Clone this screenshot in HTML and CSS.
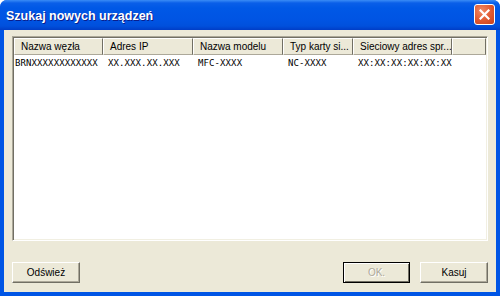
FILE: index.html
```html
<!DOCTYPE html>
<html lang="pl">
<head>
    <meta charset="UTF-8">
    <title>Szukaj nowych urządzeń</title>
    <link rel="stylesheet" href="styles.css">
</head>
<body>
    <div class="okno">
        <div class="pasek">
            <span class="tytul">Szukaj nowych urządzeń</span>
            <button class="zamknij" aria-label="Zamknij">
                <svg width="11" height="11" viewBox="0 0 11 11">
                    <path d="M1.5 1.5 L9.5 9.5 M9.5 1.5 L1.5 9.5" stroke="#fff" stroke-width="2.2" stroke-linecap="square"/>
                </svg>
            </button>
        </div>
        <div class="tresc">
            <div class="lista">
                <div class="wiersz naglowek">
                    <div class="kol">Nazwa węzła</div>
                    <div class="kol">Adres IP</div>
                    <div class="kol">Nazwa modelu</div>
                    <div class="kol">Typ karty si...</div>
                    <div class="kol">Sieciowy adres spr...</div>
                    <div class="kol"></div>
                </div>
                <div class="wiersz dane">
                    <div class="kom pierwsza">BRNXXXXXXXXXXXX</div>
                    <div class="kom">XX.XXX.XX.XXX</div>
                    <div class="kom">MFC-XXXX</div>
                    <div class="kom">NC-XXXX</div>
                    <div class="kom">XX:XX:XX:XX:XX:XX</div>
                    <div class="kom"></div>
                </div>
            </div>
            <div class="przyciski">
                <button class="przycisk">Odśwież</button>
                <div class="prawe">
                    <button class="przycisk domyslny" disabled>OK.</button>
                    <button class="przycisk">Kasuj</button>
                </div>
            </div>
        </div>
    </div>
</body>
</html>
```

FILE: styles.css
```css
body{
    margin: 0;
    font: 10px "Liberation Sans", sans-serif;
}
.okno{
    width: 500px;
    height: 296px;
    box-sizing: border-box;
    display: flex;
    flex-direction: column;
    background-color: #0055e5;
    border-radius: 7px 7px 0 0;
    overflow: hidden;
}
.pasek{
    height: 30px;
    flex-shrink: 0;
    display: flex;
    align-items: center;
    justify-content: space-between;
    padding: 0 5px 0 6px;
    background: linear-gradient(#3a8cf6 0, #0a5fe8 3px, #0058e6 8px, #0054e3 20px, #0050dc 26px, #003dc6 30px);
}
.tytul{
    color: white;
    font: bold 12.5px "Liberation Sans", sans-serif;
    text-shadow: 1px 1px 0 #0a1e8c;
    margin-top: 1px;
}
.zamknij{
    width: 21px;
    height: 21px;
    padding: 0;
    display: flex;
    align-items: center;
    justify-content: center;
    border: 1px solid white;
    border-radius: 3px;
    background: radial-gradient(circle at 35% 30%, #f08a66 0, #e0582f 55%, #c6411c 100%);
    margin-top: -2px;
}
.tresc{
    flex: 1;
    display: flex;
    flex-direction: column;
    justify-content: space-between;
    background-color: #ece9d8;
    margin: 0 4px 4px 4px;
    padding: 6px 8px 9px 8px;
}
.lista{
    height: 205px;
    box-sizing: border-box;
    background-color: white;
    border: 1px solid;
    border-color: #aca899 #fff #fff #aca899;
    box-shadow: inset 1px 1px 0 #716f64, inset -1px -1px 0 #f1efe2;
    padding: 1px;
}
.wiersz{
    display: grid;
    grid-template-columns: 89px 90px 90px 70px 99px 1fr;
}
.naglowek .kol{
    height: 15px;
    line-height: 15px;
    padding-left: 6px;
    background-color: #ece9d8;
    border-top: 1px solid white;
    border-left: 1px solid white;
    border-bottom: 1px solid #aca899;
    border-right: 1px solid #716f64;
    color: black;
    white-space: nowrap;
    overflow: hidden;
}
.dane .kom{
    height: 16px;
    line-height: 16px;
    padding-top: 3px;
    padding-left: 5px;
    white-space: nowrap;
    overflow: hidden;
    font: 9px "DejaVu Sans Mono", monospace;
    letter-spacing: 0.1px;
}
.dane .pierwsza{
    padding-left: 1px;
}
.przyciski{
    display: flex;
    justify-content: space-between;
}
.prawe{
    display: flex;
    gap: 10px;
}
.przycisk{
    width: 68px;
    height: 21px;
    padding: 0;
    background-color: #ece9d8;
    border: 1px solid;
    border-color: white #716f64 #716f64 white;
    box-shadow: inset -1px -1px 0 #aca899;
    font: 10px "Liberation Sans", sans-serif;
    color: black;
}
.domyslny{
    width: 67px;
    border: 1px solid #000;
    box-shadow: inset 1px 1px 0 white, inset -1px -1px 0 #716f64;
}
.przycisk:disabled{
    color: #aca899;
    text-shadow: 1px 1px 0 white;
}
```
